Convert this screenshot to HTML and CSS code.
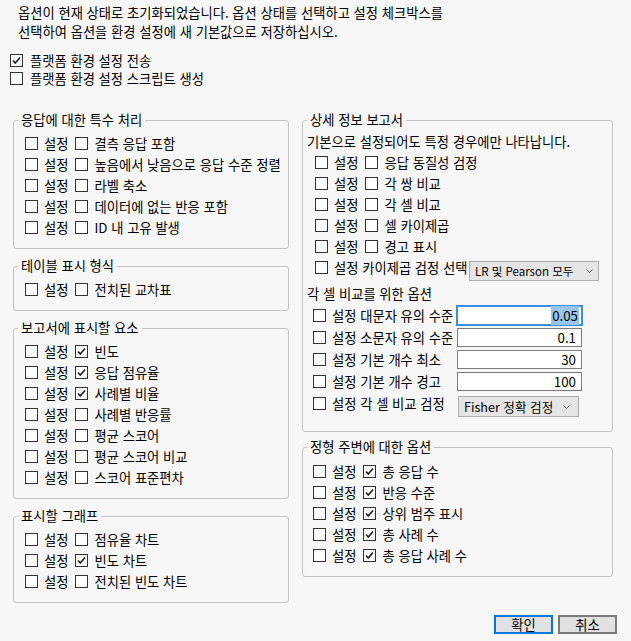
FILE: index.html
```html
<!DOCTYPE html>
<html lang="ko">
<head>
<meta charset="utf-8">
<title>옵션</title>
<link rel="stylesheet" href="styles.css">
</head>
<body>
<div class="intro">
  <div>옵션이 현재 상태로 초기화되었습니다. 옵션 상태를 선택하고 설정 체크박스를</div>
  <div>선택하여 옵션을 환경 설정에 새 기본값으로 저장하십시오.</div>
</div>

<div class="topchecks">
  <div class="toprow"><span class="cb"><svg width="11" height="11" viewBox="0 0 11 11"><path d="M2 5.5 L4.3 8 L9 2.5" fill="none" stroke="#222" stroke-width="1.7"/></svg></span>플랫폼 환경 설정 전송</div>
  <div class="toprow"><span class="cb"></span>플랫폼 환경 설정 스크립트 생성</div>
</div>

<div class="columns">
  <div class="col-left">
    <fieldset class="group">
      <legend>응답에 대한 특수 처리</legend>
      <div class="rows">
        <div class="row"><span class="cb"></span><span class="set">설정</span><span class="cb"></span>결측 응답 포함</div>
        <div class="row"><span class="cb"></span><span class="set">설정</span><span class="cb"></span>높음에서 낮음으로 응답 수준 정렬</div>
        <div class="row"><span class="cb"></span><span class="set">설정</span><span class="cb"></span>라벨 축소</div>
        <div class="row"><span class="cb"></span><span class="set">설정</span><span class="cb"></span>데이터에 없는 반응 포함</div>
        <div class="row"><span class="cb"></span><span class="set">설정</span><span class="cb"></span>ID 내 고유 발생</div>
      </div>
    </fieldset>

    <fieldset class="group">
      <legend>테이블 표시 형식</legend>
      <div class="rows">
        <div class="row"><span class="cb"></span><span class="set">설정</span><span class="cb"></span>전치된 교차표</div>
      </div>
    </fieldset>

    <fieldset class="group">
      <legend>보고서에 표시할 요소</legend>
      <div class="rows">
        <div class="row"><span class="cb"></span><span class="set">설정</span><span class="cb"><svg width="11" height="11" viewBox="0 0 11 11"><path d="M2 5.5 L4.3 8 L9 2.5" fill="none" stroke="#222" stroke-width="1.7"/></svg></span>빈도</div>
        <div class="row"><span class="cb"></span><span class="set">설정</span><span class="cb"><svg width="11" height="11" viewBox="0 0 11 11"><path d="M2 5.5 L4.3 8 L9 2.5" fill="none" stroke="#222" stroke-width="1.7"/></svg></span>응답 점유율</div>
        <div class="row"><span class="cb"></span><span class="set">설정</span><span class="cb"><svg width="11" height="11" viewBox="0 0 11 11"><path d="M2 5.5 L4.3 8 L9 2.5" fill="none" stroke="#222" stroke-width="1.7"/></svg></span>사례별 비율</div>
        <div class="row"><span class="cb"></span><span class="set">설정</span><span class="cb"></span>사례별 반응률</div>
        <div class="row"><span class="cb"></span><span class="set">설정</span><span class="cb"></span>평균 스코어</div>
        <div class="row"><span class="cb"></span><span class="set">설정</span><span class="cb"></span>평균 스코어 비교</div>
        <div class="row"><span class="cb"></span><span class="set">설정</span><span class="cb"></span>스코어 표준편차</div>
      </div>
    </fieldset>

    <fieldset class="group">
      <legend>표시할 그래프</legend>
      <div class="rows">
        <div class="row"><span class="cb"></span><span class="set">설정</span><span class="cb"></span>점유율 차트</div>
        <div class="row"><span class="cb"></span><span class="set">설정</span><span class="cb"><svg width="11" height="11" viewBox="0 0 11 11"><path d="M2 5.5 L4.3 8 L9 2.5" fill="none" stroke="#222" stroke-width="1.7"/></svg></span>빈도 차트</div>
        <div class="row"><span class="cb"></span><span class="set">설정</span><span class="cb"></span>전치된 빈도 차트</div>
      </div>
    </fieldset>
  </div>

  <div class="col-right">
    <fieldset class="group group-detail">
      <legend>상세 정보 보고서</legend>
      <div class="note">기본으로 설정되어도 특정 경우에만 나타납니다.</div>
      <div class="detail-rows">
        <div class="row"><span class="cb"></span><span class="set">설정</span><span class="cb"></span>응답 동질성 검정</div>
        <div class="row"><span class="cb"></span><span class="set">설정</span><span class="cb"></span>각 쌍 비교</div>
        <div class="row"><span class="cb"></span><span class="set">설정</span><span class="cb"></span>각 셀 비교</div>
        <div class="row"><span class="cb"></span><span class="set">설정</span><span class="cb"></span>셀 카이제곱</div>
        <div class="row"><span class="cb"></span><span class="set">설정</span><span class="cb"></span>경고 표시</div>
        <div class="combo-row">
          <div class="row"><span class="cb"></span><span class="chi-lab">설정 카이제곱 검정 선택</span></div>
          <div class="combo combo-lr"><span class="combo-text">LR 및 Pearson 모두</span><svg width="7" height="4" viewBox="0 0 7 4"><path d="M0.5 0.5 L3.5 3.5 L6.5 0.5" fill="none" stroke="#666" stroke-width="1"/></svg></div>
        </div>
      </div>
      <div class="note subhead">각 셀 비교를 위한 옵션</div>
      <div class="cell-rows">
        <div class="irow"><span class="cb"></span><span class="lab">설정 대문자 유의 수준</span><div class="tin focused"><span class="sel">0.05</span></div></div>
        <div class="irow"><span class="cb"></span><span class="lab">설정 소문자 유의 수준</span><div class="tin">0.1</div></div>
        <div class="irow"><span class="cb"></span><span class="lab">설정 기본 개수 최소</span><div class="tin">30</div></div>
        <div class="irow"><span class="cb"></span><span class="lab">설정 기본 개수 경고</span><div class="tin">100</div></div>
        <div class="combo-row fisher-row">
          <div class="irow"><span class="cb"></span><span class="lab">설정 각 셀 비교 검정</span></div>
          <div class="combo combo-fisher"><span class="combo-text">Fisher 정확 검정</span><svg width="7" height="4" viewBox="0 0 7 4"><path d="M0.5 0.5 L3.5 3.5 L6.5 0.5" fill="none" stroke="#666" stroke-width="1"/></svg></div>
        </div>
      </div>
    </fieldset>

    <fieldset class="group group-margin">
      <legend>정형 주변에 대한 옵션</legend>
      <div class="margin-rows">
        <div class="row"><span class="cb"></span><span class="set">설정</span><span class="cb"><svg width="11" height="11" viewBox="0 0 11 11"><path d="M2 5.5 L4.3 8 L9 2.5" fill="none" stroke="#222" stroke-width="1.7"/></svg></span>총 응답 수</div>
        <div class="row"><span class="cb"></span><span class="set">설정</span><span class="cb"><svg width="11" height="11" viewBox="0 0 11 11"><path d="M2 5.5 L4.3 8 L9 2.5" fill="none" stroke="#222" stroke-width="1.7"/></svg></span>반응 수준</div>
        <div class="row"><span class="cb"></span><span class="set">설정</span><span class="cb"><svg width="11" height="11" viewBox="0 0 11 11"><path d="M2 5.5 L4.3 8 L9 2.5" fill="none" stroke="#222" stroke-width="1.7"/></svg></span>상위 범주 표시</div>
        <div class="row"><span class="cb"></span><span class="set">설정</span><span class="cb"><svg width="11" height="11" viewBox="0 0 11 11"><path d="M2 5.5 L4.3 8 L9 2.5" fill="none" stroke="#222" stroke-width="1.7"/></svg></span>총 사례 수</div>
        <div class="row"><span class="cb"></span><span class="set">설정</span><span class="cb"><svg width="11" height="11" viewBox="0 0 11 11"><path d="M2 5.5 L4.3 8 L9 2.5" fill="none" stroke="#222" stroke-width="1.7"/></svg></span>총 응답 사례 수</div>
      </div>
    </fieldset>
  </div>
</div>

<div class="actions">
  <div class="btn btn-default">확인</div>
  <div class="btn">취소</div>
</div>
</body>
</html>
```

FILE: styles.css
```css
* {
  box-sizing: border-box;
}

html, body {
  margin: 0;
  padding: 0;
}

body {
  width: 631px;
  height: 641px;
  overflow: hidden;
  background: #f7f7f7;
  color: #000;
  font-family: "Noto Sans CJK KR", "Noto Sans", sans-serif;
  font-size: 13.3px;
}

.intro {
  padding: 3px 0 0 18px;
  line-height: 19px;
  white-space: nowrap;
}

.topchecks {
  margin-top: 10px;
  padding-left: 10px;
}

.toprow {
  display: flex;
  align-items: center;
  height: 18px;
  white-space: nowrap;
}

.toprow .cb {
  margin-right: 7px;
}

.columns {
  display: flex;
  align-items: flex-start;
  gap: 13px;
  margin-top: 25px;
  padding-left: 13px;
}

.col-left {
  width: 276px;
  display: flex;
  flex-direction: column;
  gap: 9px;
}

.col-right {
  width: 311px;
  display: flex;
  flex-direction: column;
  gap: 7px;
}

.group {
  margin: 0;
  min-width: 0;
  border: 1px solid #c3c3c3;
  border-radius: 3px;
  padding: 5px 6px 10px 4px;
}

.group legend {
  padding: 0 3px;
  height: 16px;
  line-height: 16px;
  white-space: nowrap;
}

.rows {
  padding-left: 7px;
}

.row {
  display: flex;
  align-items: center;
  height: 21px;
  white-space: nowrap;
}

.cb {
  flex: none;
  width: 13px;
  height: 13px;
  border: 1px solid #333;
  background: #fff;
  margin-right: 6px;
  display: flex;
  align-items: center;
  justify-content: center;
}

.cb svg {
  display: block;
}

.set {
  margin-right: 7px;
}

/* detail group */
.group-detail {
  padding-top: 3px;
  padding-bottom: 13px;
}

.note {
  height: 21px;
  line-height: 21px;
  white-space: nowrap;
}

.detail-rows {
  padding-left: 8px;
}

.combo-row {
  display: flex;
  align-items: flex-start;
  height: 24px;
}

.chi-lab {
  display: block;
  width: 129px;
  white-space: nowrap;
}

.combo {
  display: flex;
  align-items: center;
  justify-content: space-between;
  gap: 3px;
  background: #e5e5e5;
  border: 1px solid #adadad;
  white-space: nowrap;
  font-size: 12.6px;
}

.combo svg {
  flex: none;
}

.combo-lr {
  flex: none;
  width: 130px;
  height: 20px;
  margin-top: 4px;
  margin-left: 6px;
  padding: 0 5px 0 5px;
  font-size: 11.5px;
}

.subhead {
  margin-top: 2px;
}

.cell-rows {
  padding-left: 6px;
}

.irow {
  display: flex;
  align-items: center;
  height: 22px;
  white-space: nowrap;
}

.lab {
  width: 125px;
}

.tin {
  width: 125px;
  height: 19px;
  border: 1px solid #7a7a7a;
  background: #fff;
  text-align: right;
  padding-right: 5px;
  line-height: 17px;
}

.tin.focused {
  border-color: #3d8ee0;
  box-shadow: 0 0 0 1px #3d8ee0;
  padding-right: 2px;
}

.sel {
  background: #99c5eb;
  padding: 0 1px;
}

.fisher-row {
  height: 26px;
}

.combo-fisher {
  flex: none;
  width: 121px;
  height: 21px;
  margin-top: 4px;
  margin-left: 1px;
  padding: 0 8px 0 5px;
}

/* margin options group */
.group-margin {
  padding-top: 6px;
}

.margin-rows {
  padding-left: 6px;
}

/* buttons */
.actions {
  display: flex;
  justify-content: flex-end;
  gap: 5px;
  margin-top: 12px;
  padding-right: 14px;
}

.btn {
  width: 59px;
  height: 19px;
  border: 1px solid #7a7a7a;
  box-shadow: inset 0 0 0 1px #7a7a7a;
  background: #e1e1e1;
  text-align: center;
  line-height: 17px;
}

.btn-default {
  border-color: #0078d7;
  box-shadow: inset 0 0 0 1px #0078d7;
}
```
